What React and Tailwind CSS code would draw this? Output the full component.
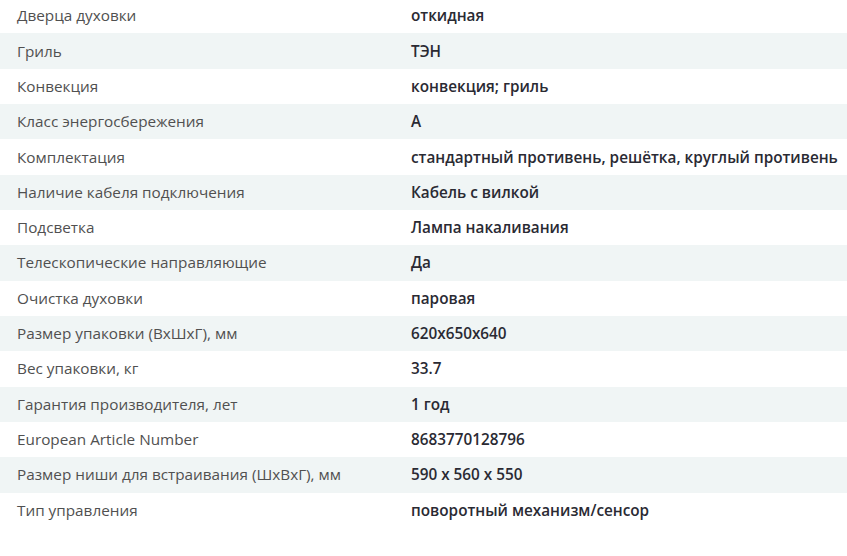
const specs = [
  ["Дверца духовки", "откидная"],
  ["Гриль", "ТЭН"],
  ["Конвекция", "конвекция; гриль"],
  ["Класс энергосбережения", "A"],
  ["Комплектация", "стандартный противень, решётка, круглый противень"],
  ["Наличие кабеля подключения", "Кабель с вилкой"],
  ["Подсветка", "Лампа накаливания"],
  ["Телескопические направляющие", "Да"],
  ["Очистка духовки", "паровая"],
  ["Размер упаковки (ВхШхГ), мм", "620х650х640"],
  ["Вес упаковки, кг", "33.7"],
  ["Гарантия производителя, лет", "1 год"],
  ["European Article Number", "8683770128796"],
  ["Размер ниши для встраивания (ШхВхГ), мм", "590 x 560 x 550"],
  ["Тип управления", "поворотный механизм/сенсор"],
];

export default function App() {
  return (
    <div className="w-[847px] h-[556px] overflow-hidden bg-white font-['Open_Sans',sans-serif] text-[15.3px]">
      <div className="-mt-[2px]">
        {specs.map(([label, value], i) => (
          <div
            key={label}
            className={`flex items-center h-[35.33px] ${i % 2 === 1 ? "bg-[#f0f5f5]" : "bg-white"}`}
          >
            <div className="w-[411px] pl-[17px] text-[#505050]">{label}</div>
            <div className="flex-1 font-semibold text-[#2a2a33] whitespace-nowrap">{value}</div>
          </div>
        ))}
      </div>
    </div>
  );
}
